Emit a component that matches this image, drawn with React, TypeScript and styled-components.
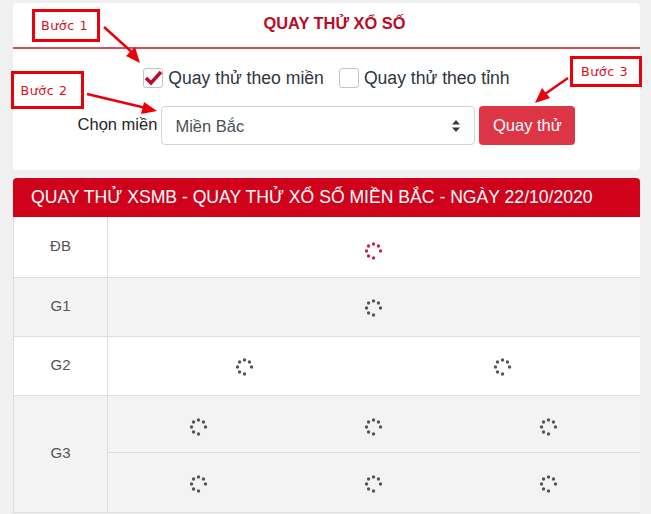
import styled, { createGlobalStyle } from "styled-components";

const GlobalStyle = createGlobalStyle`
  html, body {
    margin: 0;
    padding: 0;
    background: #f0f0f0;
    font-family: "Liberation Sans", Arial, sans-serif;
    overflow: hidden;
  }
`;

const Page = styled.div`
  position: relative;
  width: 651px;
  height: 514px;
  overflow: hidden;
  padding: 3px 11px 0 13px;
  box-sizing: border-box;
`;

const Card = styled.section`
  height: 167px;
  background: #fff;
  border-radius: 4px;
  margin-bottom: 8px;
`;

const Title = styled.h2`
  margin: 0;
  height: 44px;
  line-height: 41px;
  padding-left: 16px;
  border-bottom: 2px solid #d5505f;
  text-align: center;
  font-size: 16.4px;
  font-weight: 700;
  color: #bb0a26;
`;

const CheckRow = styled.div`
  display: flex;
  justify-content: center;
  align-items: center;
  gap: 15px;
  height: 20px;
  margin-top: 19px;
`;

const CheckLabel = styled.label`
  display: flex;
  align-items: center;
  gap: 5px;
  font-size: 17.6px;
  color: #2c3640;
`;

const Box = styled.span`
  width: 18px;
  height: 18px;
  border: 1px solid #c4c4c4;
  border-radius: 3px;
  background: #fff;
  display: flex;
  align-items: center;
  justify-content: center;
`;

const FormRow = styled.div`
  display: flex;
  justify-content: center;
  align-items: center;
  margin-top: 18px;
`;

const FieldLabel = styled.span`
  font-size: 16.5px;
  color: #212529;
  margin-right: 4px;
  position: relative;
  top: -1px;
`;

const Select = styled.div`
  width: 314px;
  height: 39px;
  box-sizing: border-box;
  border: 1px solid #ced4da;
  border-radius: 4px;
  padding: 1px 13px 0;
  display: flex;
  align-items: center;
  justify-content: space-between;
  font-size: 16.5px;
  color: #495057;
`;

const SpinButton = styled.button`
  width: 96px;
  height: 39px;
  margin-left: 4px;
  border: 0;
  border-radius: 4px;
  background: #dc3545;
  color: #fff;
  font: 16.5px "Liberation Sans", Arial, sans-serif;
`;

const Banner = styled.h3`
  margin: 0;
  height: 39px;
  line-height: 38px;
  padding-left: 18px;
  background: #d0021b;
  border-radius: 4px 4px 0 0;
  color: #fff;
  font-size: 17.6px;
  font-weight: 400;
  white-space: nowrap;
`;

const Table = styled.div`
  border-left: 1px solid #ddd;
`;

const Row = styled.div<{ $shaded?: boolean; $height: number }>`
  display: flex;
  height: ${(p) => p.$height}px;
  box-sizing: border-box;
  border-bottom: 1px solid #ddd;
  background: ${(p) => (p.$shaded ? "#f3f3f3" : "#fff")};
`;

const Prize = styled.div`
  width: 94px;
  flex: none;
  border-right: 1px solid #ddd;
  display: flex;
  align-items: center;
  justify-content: center;
  box-sizing: border-box;
  padding-bottom: 3px;
  font-size: 15px;
  color: #555;
`;

const Lines = styled.div`
  flex: 1;
  display: flex;
  flex-direction: column;
`;

const Line = styled.div<{ $inset: number; $drop: number; $height?: number }>`
  flex: ${(p) => (p.$height ? `0 0 ${p.$height}px` : "1")};
  box-sizing: border-box;
  display: flex;
  align-items: center;
  padding: ${(p) => p.$drop}px ${(p) => p.$inset}px 0;
  & + & {
    border-top: 1px solid #ddd;
  }
`;

const Cell = styled.div`
  flex: 1;
  display: flex;
  justify-content: center;
`;

const Note = styled.div<{ $left: number; $top: number; $w: number; $h: number; $shift?: number }>`
  position: absolute;
  left: ${(p) => p.$left}px;
  top: ${(p) => p.$top}px;
  width: ${(p) => p.$w}px;
  height: ${(p) => p.$h}px;
  box-sizing: border-box;
  border: 3px solid #e8000b;
  background: #fff;
  display: flex;
  align-items: center;
  justify-content: center;
  padding-right: ${(p) => p.$shift ?? 0}px;
  color: #d8101c;
  font: 12.7px "DejaVu Sans", sans-serif;
  letter-spacing: 0.6px;
`;

const Arrows = styled.svg`
  position: absolute;
  left: 0;
  top: 0;
  pointer-events: none;
`;

function Spinner({ color = "#555" }: { color?: string }) {
  const dots = [0, 45, 90, 180, 225, 270, 315];
  return (
    <svg width="20" height="20" viewBox="0 0 20 20">
      {dots.map((d) => (
        <circle
          key={d}
          cx={9.5 + 7 * Math.sin((d * Math.PI) / 180)}
          cy={10 - 7 * Math.cos((d * Math.PI) / 180)}
          r="1.7"
          fill={color}
        />
      ))}
    </svg>
  );
}

type SpinnersProps = { count: number; inset?: number; drop?: number; height?: number; color?: string };

function Spinners({ count, inset = 0, drop = 2, height, color }: SpinnersProps) {
  return (
    <Line $inset={inset} $drop={drop} $height={height}>
      {Array.from({ length: count }).map((_, i) => (
        <Cell key={i}>
          <Spinner color={color} />
        </Cell>
      ))}
    </Line>
  );
}

export default function App() {
  return (
    <Page>
      <GlobalStyle />
      <Card>
        <Title>QUAY THỬ XỔ SỐ</Title>
        <CheckRow>
          <CheckLabel>
            <Box>
              <svg width="18" height="16" viewBox="0 0 18 16" style={{ overflow: "visible" }}>
                <path d="M2 8 L7 13 L17 2" fill="none" stroke="#b80f2e" strokeWidth="3.6" />
              </svg>
            </Box>
            Quay thử theo miền
          </CheckLabel>
          <CheckLabel>
            <Box />
            Quay thử theo tỉnh
          </CheckLabel>
        </CheckRow>
        <FormRow>
          <FieldLabel>Chọn miền</FieldLabel>
          <Select>
            Miền Bắc
            <svg width="10" height="14" viewBox="0 0 10 14">
              <path d="M5 1 L9 5.6 H1 Z M5 13 L1 8.4 H9 Z" fill="#343a40" />
            </svg>
          </Select>
          <SpinButton>Quay thử</SpinButton>
        </FormRow>
      </Card>

      <Banner>QUAY THỬ XSMB - QUAY THỬ XỔ SỐ MIỀN BẮC - NGÀY 22/10/2020</Banner>
      <Table>
        <Row $height={61}>
          <Prize>ĐB</Prize>
          <Lines>
            <Spinners count={1} drop={8} color="#c9233f" />
          </Lines>
        </Row>
        <Row $height={59} $shaded>
          <Prize>G1</Prize>
          <Lines>
            <Spinners count={1} />
          </Lines>
        </Row>
        <Row $height={59}>
          <Prize>G2</Prize>
          <Lines>
            <Spinners count={2} inset={8} />
          </Lines>
        </Row>
        <Row $height={117} $shaded>
          <Prize>G3</Prize>
          <Lines>
            <Spinners count={3} inset={3} drop={5} height={56} />
            <Spinners count={3} inset={3} drop={3} />
          </Lines>
        </Row>
      </Table>

      <Note $left={32} $top={9} $w={68} $h={33} $shift={3}>Bước 1</Note>
      <Note $left={11} $top={71} $w={73} $h={38} $shift={7}>Bước 2</Note>
      <Note $left={570} $top={56} $w={72} $h={31} $shift={3}>Bước 3</Note>
      <Arrows width="651" height="514" viewBox="0 0 651 514">
        <g stroke="#e8000b" strokeWidth="2.5" fill="#e8000b">
          <line x1="104" y1="27" x2="134" y2="54" />
          <path d="M140 63 L126 56 L135 47 Z" stroke="none" />
          <line x1="87" y1="94" x2="146" y2="108" />
          <path d="M157 111 L141 114 L144 102 Z" stroke="none" />
          <line x1="568" y1="78" x2="545" y2="94" />
          <path d="M535 103 L542 88 L550 98 Z" stroke="none" />
        </g>
      </Arrows>
    </Page>
  );
}
